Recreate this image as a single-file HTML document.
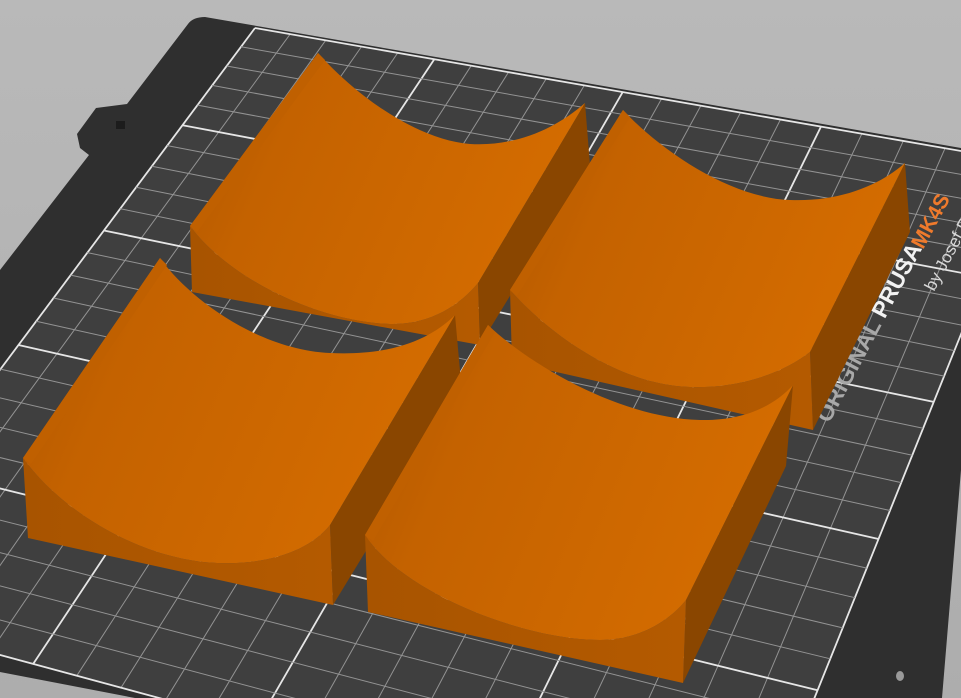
<!DOCTYPE html>
<html><head><meta charset="utf-8"><style>
html,body{margin:0;padding:0;background:#b4b4b4;overflow:hidden;width:961px;height:698px}
svg{display:block;position:absolute;left:0;top:0}
</style></head><body>
<svg id="s" width="961" height="698" viewBox="0 0 961 698" xmlns="http://www.w3.org/2000/svg">
<defs>
<linearGradient id="bg" x1="0" y1="0" x2="0" y2="1"><stop offset="0" stop-color="#b9b9b9"/><stop offset="1" stop-color="#adadad"/></linearGradient>
<linearGradient id="top" x1="0" y1="0" x2="1" y2="0.3"><stop offset="0" stop-color="#b05700"/><stop offset="0.3" stop-color="#c46200"/><stop offset="1" stop-color="#d46c00"/></linearGradient>
<linearGradient id="front" x1="0" y1="0" x2="1" y2="0"><stop offset="0" stop-color="#a85400"/><stop offset="1" stop-color="#b45a00"/></linearGradient>
<clipPath id="plateclip"><path d="M205,17 L961,148 L961,470 L942,698 L135,698 L0,672 L0,270 L89,155 L80,148 L77,134 L96,108 L127,104 L188,24 Q193,17 205,17 Z"/></clipPath>
</defs>
<rect width="961" height="698" fill="url(#bg)"/>
<path d="M205,17 L961,148 L961,470 L942,698 L135,698 L0,672 L0,270 L89,155 L80,148 L77,134 L96,108 L127,104 L188,24 Q193,17 205,17 Z" fill="#2f2f2f"/>
<rect x="116" y="121" width="9" height="8" fill="#1c1c1c"/>
<ellipse cx="900" cy="676" rx="4" ry="5" fill="#9a9a9a"/>
<g clip-path="url(#plateclip)">
<polygon points="255,28 1030,163 750,858 -177,607" fill="#3f3f3f"/>
<g id="grid"></g>
</g>
<g font-family="Liberation Sans, sans-serif" font-weight="bold">
<text transform="translate(829,424) rotate(-62)" font-size="23" fill="#a8a8a8">ORIGINAL <tspan fill="#f2f2f2">PRUSA</tspan></text>
<text transform="translate(923,250) rotate(-62)" font-size="21" fill="#ef7a2c">MK4S</text>
<text transform="translate(934,292) rotate(-62)" font-size="17" font-weight="normal" fill="#d8d8d8">by Josef Prusa</text>
</g>

<!-- Trough A -->
<path d="M478,283 L585,103 L590,165 L480,345 Z" fill="#8a4600"/>
<path d="M190,226 C230,280 320,322 390,324 C430,325 460,305 478,283 L480,345 L192,292 Z" fill="url(#front)"/>
<path d="M318,53 C360,100 420,140 470,144 C520,147 560,125 585,103 L478,283 C460,305 430,325 390,324 C320,322 230,280 190,226 Z" fill="url(#top)"/>
<path d="M318,53 L190,226 L197,232 L325,60 Z" fill="#c06000"/>
<!-- Trough B -->
<path d="M810,352 L905,163 L910,232 L813,430 Z" fill="#8a4600"/>
<path d="M510,290 C550,335 620,385 690,387 C740,389 785,372 810,352 L813,430 L512,362 Z" fill="url(#front)"/>
<path d="M623,110 C660,150 730,198 790,200 C840,202 880,185 905,163 L810,352 C785,372 740,389 690,387 C620,385 550,335 510,290 Z" fill="url(#top)"/>
<path d="M623,110 L510,290 L517,296 L630,117 Z" fill="#c06000"/>
<!-- Trough C -->
<path d="M330,525 L455,315 L462,393 L333,605 Z" fill="#8a4600"/>
<path d="M23,458 C60,510 140,560 217,563 C270,565 310,550 330,525 L333,605 L28,538 Z" fill="url(#front)"/>
<path d="M160,258 C190,300 260,350 330,353 C390,356 430,340 455,315 L330,525 C310,550 270,565 217,563 C140,560 60,510 23,458 Z" fill="url(#top)"/>
<path d="M160,258 L23,458 L31,464 L167,265 Z" fill="#c06000"/>
<!-- Trough D -->
<path d="M686,600 L793,385 L786,466 L683,683 Z" fill="#8a4600"/>
<path d="M365,535 C400,590 520,640 600,640 C640,640 670,620 686,600 L683,683 L368,612 Z" fill="url(#front)"/>
<path d="M488,325 C530,365 620,418 700,420 C745,421 775,405 793,385 L686,600 C670,620 640,640 600,640 C520,640 400,590 365,535 Z" fill="url(#top)"/>
<path d="M488,325 L365,535 L373,541 L495,332 Z" fill="#c06000"/>
</svg>
<script>
(function(){
var X=[255,1030,750,-177],Y=[28,163,858,607];
var dx1=X[1]-X[2],dx2=X[3]-X[2],dx3=X[0]-X[1]+X[2]-X[3];
var dy1=Y[1]-Y[2],dy2=Y[3]-Y[2],dy3=Y[0]-Y[1]+Y[2]-Y[3];
var den=dx1*dy2-dx2*dy1;
var g=(dx3*dy2-dx2*dy3)/den,h=(dx1*dy3-dx3*dy1)/den;
var a=X[1]-X[0]+g*X[1],b=X[3]-X[0]+h*X[3],c=X[0];
var d=Y[1]-Y[0]+g*Y[1],e=Y[3]-Y[0]+h*Y[3],f=Y[0];
function P(u,v){var w=g*u+h*v+1;return [(a*u+b*v+c)/w,(d*u+e*v+f)/w];}
var G=document.getElementById('grid'),out='';
function L(p,q,maj){out+='<line x1="'+p[0].toFixed(1)+'" y1="'+p[1].toFixed(1)+'" x2="'+q[0].toFixed(1)+'" y2="'+q[1].toFixed(1)+'" stroke="'+(maj?'#e6e6e6':'#939393')+'" stroke-width="'+(maj?1.8:1)+'"/>';}
var NU=20,NV=25;
for(var i=0;i<=NU;i++){var u=i/NU;L(P(u,0),P(u,1),i%5==0);}
for(var j=0;j<=NV;j++){var v=j/NV;L(P(0,v),P(1,v),j%5==0);}
G.innerHTML=out;
})();
</script>
</body></html>
